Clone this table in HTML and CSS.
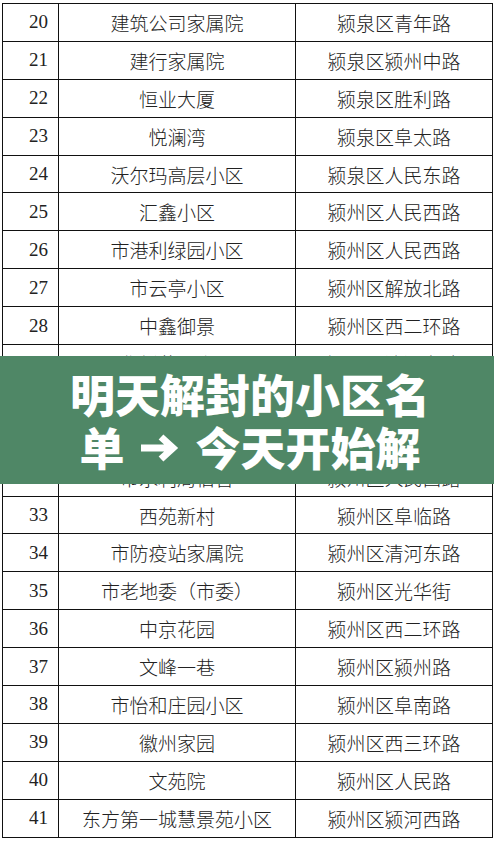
FILE: index.html
```html
<!DOCTYPE html>
<html lang="zh-CN">
<head>
<meta charset="utf-8">
<title>小区名单</title>
<link rel="stylesheet" href="styles.css">
</head>
<body>
<div class="page">
  <div class="table">
    <div class="row"><div class="num">20</div><div class="name">建筑公司家属院</div><div class="addr">颍泉区青年路</div></div>
    <div class="row"><div class="num">21</div><div class="name">建行家属院</div><div class="addr">颍泉区颍州中路</div></div>
    <div class="row"><div class="num">22</div><div class="name">恒业大厦</div><div class="addr">颍泉区胜利路</div></div>
    <div class="row"><div class="num">23</div><div class="name">悦澜湾</div><div class="addr">颍泉区阜太路</div></div>
    <div class="row"><div class="num">24</div><div class="name">沃尔玛高层小区</div><div class="addr">颍泉区人民东路</div></div>
    <div class="row"><div class="num">25</div><div class="name">汇鑫小区</div><div class="addr">颍州区人民西路</div></div>
    <div class="row"><div class="num">26</div><div class="name">市港利绿园小区</div><div class="addr">颍州区人民西路</div></div>
    <div class="row"><div class="num">27</div><div class="name">市云亭小区</div><div class="addr">颍州区解放北路</div></div>
    <div class="row"><div class="num">28</div><div class="name">中鑫御景</div><div class="addr">颍州区西二环路</div></div>
    <div class="row"><div class="num">29</div><div class="name">华新花园小区</div><div class="addr">颍州区清河东路</div></div>
    <div class="row"><div class="num">30</div><div class="name">清华苑小区</div><div class="addr">颍州区清河路</div></div>
    <div class="row"><div class="num">31</div><div class="name">金色家园</div><div class="addr">颍州区颍州路</div></div>
    <div class="row"><div class="num">32</div><div class="name">市水利局宿舍</div><div class="addr">颍州区人民西路</div></div>
    <div class="row"><div class="num">33</div><div class="name">西苑新村</div><div class="addr">颍州区阜临路</div></div>
    <div class="row"><div class="num">34</div><div class="name">市防疫站家属院</div><div class="addr">颍州区清河东路</div></div>
    <div class="row"><div class="num">35</div><div class="name">市老地委（市委）</div><div class="addr">颍州区光华街</div></div>
    <div class="row"><div class="num">36</div><div class="name">中京花园</div><div class="addr">颍州区西二环路</div></div>
    <div class="row"><div class="num">37</div><div class="name">文峰一巷</div><div class="addr">颍州区颍州路</div></div>
    <div class="row"><div class="num">38</div><div class="name">市怡和庄园小区</div><div class="addr">颍州区阜南路</div></div>
    <div class="row"><div class="num">39</div><div class="name">徽州家园</div><div class="addr">颍州区西三环路</div></div>
    <div class="row"><div class="num">40</div><div class="name">文苑院</div><div class="addr">颍州区人民路</div></div>
    <div class="row"><div class="num">41</div><div class="name">东方第一城慧景苑小区</div><div class="addr">颍州区颍河西路</div></div>
  </div>
  <div class="banner">
    <div class="banner-line">明天解封的小区名</div>
    <div class="banner-line">单<svg class="arrow" width="40" height="28" viewBox="0 0 40 28" aria-label="→"><path d="M2 14 H34 M22 3 L34 14 L22 25" fill="none" stroke="#ffffff" stroke-width="7" stroke-linecap="butt" stroke-linejoin="miter"/></svg>今天开始解</div>
  </div>
</div>
</body>
</html>
```

FILE: styles.css
```css
html, body {
  margin: 0;
  padding: 0;
  background: #ffffff;
}

.page {
  position: relative;
  width: 494px;
  height: 842px;
  overflow: hidden;
}

.table {
  margin: 3px 0 0 2px;
  width: 491px;
  border-top: 1px solid #111;
  border-left: 1px solid #111;
  border-right: 1px solid #111;
  box-sizing: border-box;
}

.row {
  display: grid;
  grid-template-columns: 56px 237px 1fr;
  height: 37.9px;
  border-bottom: 1px solid #111;
  box-sizing: border-box;
  color: #222;
}

.num {
  display: flex;
  align-items: center;
  justify-content: flex-end;
  padding-right: 10px;
  border-right: 1px solid #111;
  font-family: "Liberation Serif", "Times New Roman", serif;
  font-size: 19px;
}

.name,
.addr {
  display: flex;
  align-items: center;
  justify-content: center;
  font-family: "Noto Sans CJK SC", "Noto Sans", sans-serif;
  font-size: 19px;
  font-weight: 300;
  white-space: nowrap;
}

.name {
  border-right: 1px solid #111;
}

.banner {
  position: absolute;
  left: 0;
  top: 356px;
  width: 494px;
  height: 128px;
  background: #4f8766;
  display: flex;
  flex-direction: column;
  align-items: center;
  justify-content: center;
  padding-left: 6px;
  box-sizing: border-box;
}

.banner-line {
  display: flex;
  align-items: center;
  color: #ffffff;
  font-family: "Noto Sans CJK SC", sans-serif;
  font-weight: 900;
  font-size: 45px;
  line-height: 53px;
  white-space: nowrap;
}

.arrow {
  margin: 3px 17px 0 14px;
}
```
